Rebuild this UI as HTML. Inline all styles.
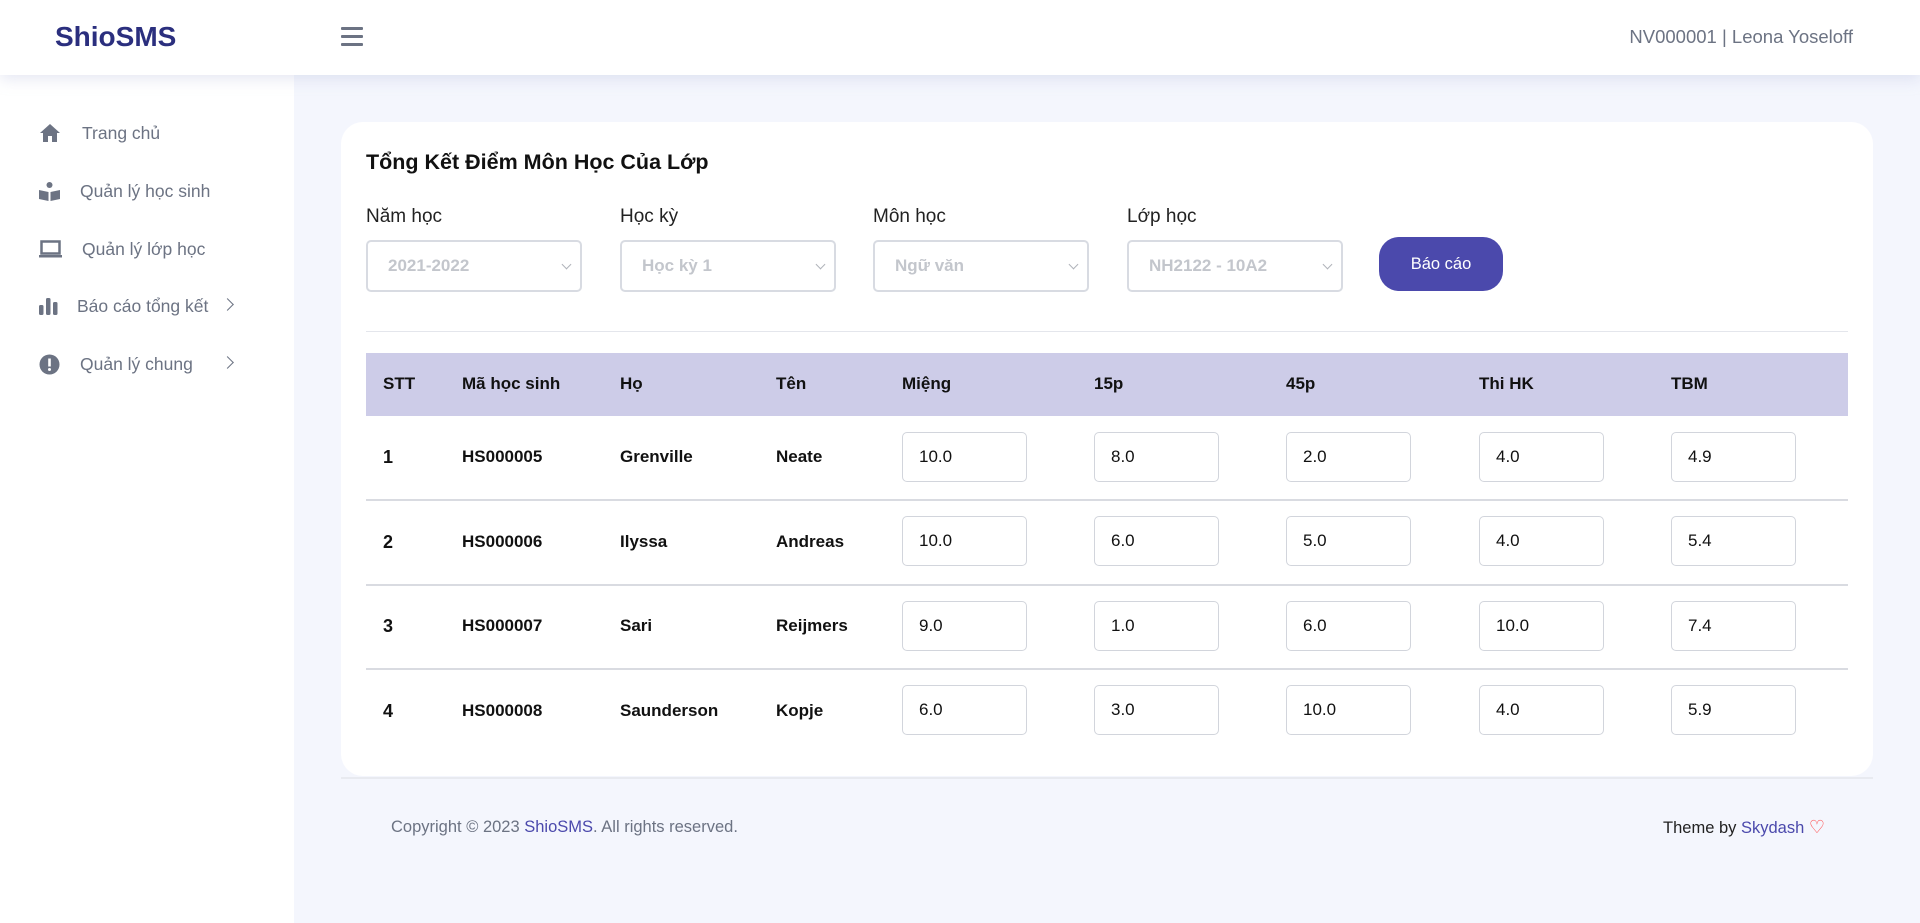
<!DOCTYPE html>
<html><head><meta charset="utf-8"><style>
*{box-sizing:border-box;margin:0;padding:0}
body{width:1920px;height:923px;overflow:hidden;background:#f4f6fd;font-family:"Liberation Sans",sans-serif;color:#000;position:relative}
.hdr{position:absolute;left:0;top:0;width:1920px;height:75px;background:#fff;box-shadow:0 4px 14px rgba(180,185,220,.35);z-index:2}
.logo{position:absolute;left:55px;top:21px;font-size:28px;font-weight:bold;color:#2b2f7e}
.ham{position:absolute;left:341px;top:27px;width:22px}
.ham div{height:3px;background:#6c7383;margin-bottom:5px;border-radius:1px}
.user{position:absolute;right:67px;top:26px;font-size:18.5px;color:#6c7383}
.side{position:absolute;left:0;top:75px;width:294px;height:848px;background:#fff}
.mi{position:absolute;left:39px;font-size:17.5px;color:#6c7383;display:flex;align-items:center}
.mi svg{position:absolute;left:0}
.mi span{position:absolute;white-space:nowrap}
.chev{position:absolute;left:184px;top:-6px;width:9px;height:9px;border-right:1.6px solid #6c7383;border-top:1.6px solid #6c7383;transform:rotate(45deg)}
.card{position:absolute;left:341px;top:122px;width:1532px;height:654px;background:#fff;border-radius:22px}
.title{position:absolute;left:25px;top:28px;font-size:21.5px;font-weight:bold;color:#111}
.lbl{position:absolute;top:84px;font-size:19px;color:#222}
.sel{position:absolute;top:118px;width:216px;height:52px;border:2px solid #d8dbe2;border-radius:5px;color:#c3c6cc;font-size:17px;font-weight:bold;padding:14px 0 0 20px}
.sel:after{content:"";position:absolute;right:10px;top:19px;width:6px;height:6px;border-right:1.5px solid #b0b3ba;border-bottom:1.5px solid #b0b3ba;transform:rotate(45deg)}
.btn{position:absolute;left:1038px;top:115px;width:124px;height:54px;background:#4b49ac;border-radius:20px;color:#fff;font-size:16.5px;text-align:center;line-height:54px}
.hr{position:absolute;left:25px;top:209px;width:1482px;height:1px;background:#e4e6ec}
.th{position:absolute;left:25px;top:231px;width:1482px;height:63px;background:#cdcce8}
.c{position:absolute;font-size:17px;font-weight:bold;color:#111;white-space:nowrap}
.rowline{position:absolute;left:25px;width:1482px;height:1.5px;background:#d9dbe1}
.inp{position:absolute;width:125px;height:50px;border:1.5px solid #d2d5dc;border-radius:5px;font-size:17px;color:#111;padding:14px 0 0 16px}
.foot{position:absolute;left:341px;top:777px;width:1532px;height:2px;background:#e8eaf0}
.ft{position:absolute;top:817px;font-size:16.5px;color:#6c7383;line-height:20px}
</style></head><body>
<div class="hdr">
<div class="logo">ShioSMS</div>
<div class="ham"><div></div><div></div><div></div></div>
<div class="user">NV000001 | Leona Yoseloff</div>
</div>
<div class="side">
<div class="mi" style="top:58px"><svg width="22" height="20" viewBox="0 0 22 20"><path d="M11 1 L1 10 H4 V19 H9 V13 H13 V19 H18 V10 H21 Z" fill="#6c7383"/></svg><span style="left:43px;top:-10px">Trang chủ</span></div>
<div class="mi" style="top:116px"><svg width="21" height="21" viewBox="0 0 21 21"><circle cx="10.5" cy="4" r="3" fill="#6c7383"/><path d="M0 9 L9.5 11 V20 L0 18Z M11.5 11 L21 9 V18 L11.5 20Z" fill="#6c7383"/></svg><span style="left:41px;top:-10px">Quản lý học sinh</span></div>
<div class="mi" style="top:174px"><svg width="23" height="18" viewBox="0 0 23 18"><rect x="2.5" y="1.5" width="18" height="12" fill="none" stroke="#6c7383" stroke-width="2.5"/><rect x="0" y="15" width="23" height="2.5" fill="#6c7383"/></svg><span style="left:43px;top:-10px">Quản lý lớp học</span></div>
<div class="mi" style="top:231px"><svg width="19" height="18" viewBox="0 0 19 18"><rect x="0" y="8" width="4.5" height="10" rx="1.5" fill="#6c7383"/><rect x="7" y="1" width="4.5" height="17" rx="1.5" fill="#6c7383"/><rect x="14" y="5" width="4.5" height="13" rx="1.5" fill="#6c7383"/></svg><span style="left:38px;top:-10px">Báo cáo tổng kết</span><div class="chev"></div></div>
<div class="mi" style="top:289px"><svg width="21" height="21" viewBox="0 0 21 21"><circle cx="10.5" cy="10.5" r="10" fill="#6c7383"/><rect x="9.2" y="4.5" width="2.6" height="8" fill="#fff"/><circle cx="10.5" cy="15.5" r="1.5" fill="#fff"/></svg><span style="left:41px;top:-10px">Quản lý chung</span><div class="chev"></div></div>
</div>
<div class="card">
<div class="title">Tổng Kết Điểm Môn Học Của Lớp</div>
<div class="lbl" style="left:25px">Năm học</div>
<div class="lbl" style="left:279px">Học kỳ</div>
<div class="lbl" style="left:532px">Môn học</div>
<div class="lbl" style="left:786px">Lớp học</div>
<div class="sel" style="left:25px">2021-2022</div>
<div class="sel" style="left:279px">Học kỳ 1</div>
<div class="sel" style="left:532px">Ngữ văn</div>
<div class="sel" style="left:786px">NH2122 - 10A2</div>
<div class="btn">Báo cáo</div>
<div class="hr"></div>
<div class="th"></div>
<div class="c" style="left:42px;top:252px">STT</div>
<div class="c" style="left:121px;top:252px">Mã học sinh</div>
<div class="c" style="left:279px;top:252px">Họ</div>
<div class="c" style="left:435px;top:252px">Tên</div>
<div class="c" style="left:561px;top:252px">Miệng</div>
<div class="c" style="left:753px;top:252px">15p</div>
<div class="c" style="left:945px;top:252px">45p</div>
<div class="c" style="left:1138px;top:252px">Thi HK</div>
<div class="c" style="left:1330px;top:252px">TBM</div>

<div class="rowline" style="top:377px"></div>
<div class="rowline" style="top:462px"></div>
<div class="rowline" style="top:546px"></div>

<div class="c" style="left:42px;top:325px;font-size:18px">1</div>
<div class="c" style="left:121px;top:325px">HS000005</div>
<div class="c" style="left:279px;top:325px">Grenville</div>
<div class="c" style="left:435px;top:325px">Neate</div>
<div class="inp" style="left:561px;top:310px">10.0</div>
<div class="inp" style="left:753px;top:310px">8.0</div>
<div class="inp" style="left:945px;top:310px">2.0</div>
<div class="inp" style="left:1138px;top:310px">4.0</div>
<div class="inp" style="left:1330px;top:310px">4.9</div>

<div class="c" style="left:42px;top:410px;font-size:18px">2</div>
<div class="c" style="left:121px;top:410px">HS000006</div>
<div class="c" style="left:279px;top:410px">Ilyssa</div>
<div class="c" style="left:435px;top:410px">Andreas</div>
<div class="inp" style="left:561px;top:394px">10.0</div>
<div class="inp" style="left:753px;top:394px">6.0</div>
<div class="inp" style="left:945px;top:394px">5.0</div>
<div class="inp" style="left:1138px;top:394px">4.0</div>
<div class="inp" style="left:1330px;top:394px">5.4</div>

<div class="c" style="left:42px;top:494px;font-size:18px">3</div>
<div class="c" style="left:121px;top:494px">HS000007</div>
<div class="c" style="left:279px;top:494px">Sari</div>
<div class="c" style="left:435px;top:494px">Reijmers</div>
<div class="inp" style="left:561px;top:479px">9.0</div>
<div class="inp" style="left:753px;top:479px">1.0</div>
<div class="inp" style="left:945px;top:479px">6.0</div>
<div class="inp" style="left:1138px;top:479px">10.0</div>
<div class="inp" style="left:1330px;top:479px">7.4</div>

<div class="c" style="left:42px;top:579px;font-size:18px">4</div>
<div class="c" style="left:121px;top:579px">HS000008</div>
<div class="c" style="left:279px;top:579px">Saunderson</div>
<div class="c" style="left:435px;top:579px">Kopje</div>
<div class="inp" style="left:561px;top:563px">6.0</div>
<div class="inp" style="left:753px;top:563px">3.0</div>
<div class="inp" style="left:945px;top:563px">10.0</div>
<div class="inp" style="left:1138px;top:563px">4.0</div>
<div class="inp" style="left:1330px;top:563px">5.9</div>
</div>
<div class="foot"></div>
<div class="ft" style="left:391px">Copyright © 2023 <span style="color:#4b49ac">ShioSMS</span>. All rights reserved.</div>
<div class="ft" style="right:95px;color:#222">Theme by <span style="color:#4b49ac">Skydash</span> <span style="color:#ff4747;font-size:18px">&#9825;</span></div>
</body></html>
